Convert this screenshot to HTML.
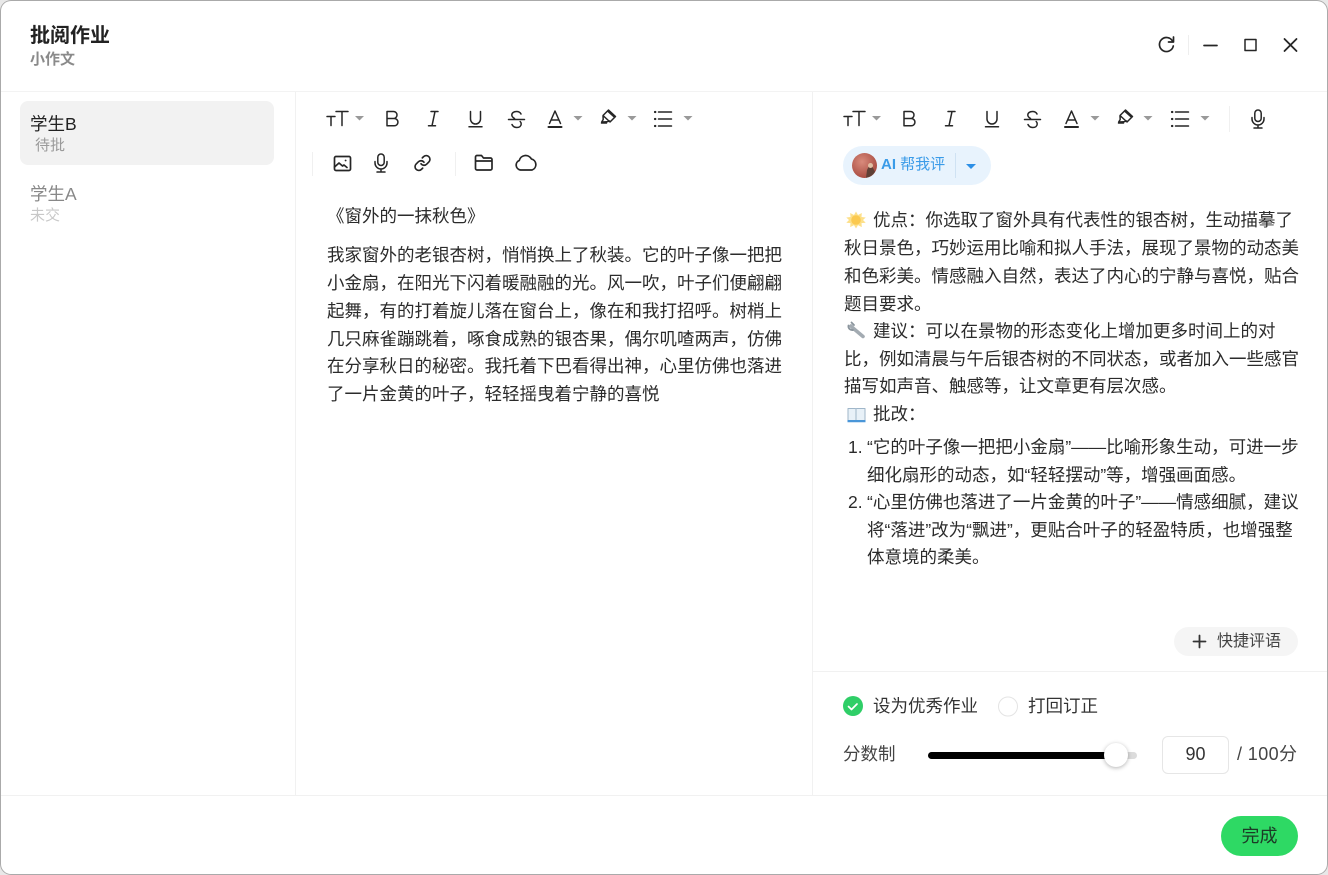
<!DOCTYPE html>
<html lang="zh"><head><meta charset="utf-8"><title>批阅作业</title>
<style>
html,body{margin:0;padding:0;width:1328px;height:875px;overflow:hidden;background:#e8e8e8}
#w{position:absolute;left:0;top:0;width:1328px;height:875px;background:#fff;border-radius:11px;overflow:hidden;box-shadow:inset 0 0 0 1px #aaa}
.t{position:absolute;white-space:nowrap;font-family:"Liberation Sans","Noto Sans CJK SC",sans-serif;color:#2b2b2b;font-size:17.5px;line-height:28px;font-weight:400}
.b{position:absolute}
svg{position:absolute;left:0;top:0}
</style></head><body>
<div id="w"></div>
<div class="b" style="left:295px;top:91px;width:1px;height:704px;background:#f1f1f1"></div>
<div class="b" style="left:812px;top:91px;width:1px;height:704px;background:#f1f1f1"></div>
<div class="b" style="left:1px;top:91px;width:1326px;height:1px;background:#f3f3f3"></div>
<div class="b" style="left:1px;top:795px;width:1326px;height:1px;background:#f1f1f1"></div>
<div class="b" style="left:813px;top:671px;width:514px;height:1px;background:#f1f1f1"></div>
<div class="b" style="left:20px;top:101px;width:254px;height:64px;background:#f2f2f2;border-radius:8px"></div>
<div class="b" style="left:1188px;top:35px;width:1px;height:20px;background:#eee"></div>
<div class="b" style="left:312px;top:152px;width:1px;height:24px;background:#f0f0f0"></div>
<div class="b" style="left:455px;top:152px;width:1px;height:24px;background:#f0f0f0"></div>
<div class="b" style="left:1229px;top:106px;width:1px;height:26px;background:#f0f0f0"></div>

<div class="t" style="left:30px;top:22px;font-size:20px;font-weight:700;color:#222">批阅作业</div>
<div class="t" style="left:30px;top:46px;font-size:15px;font-weight:700;color:#8a8a8a">小作文</div>
<div class="t" style="left:30px;top:110px;color:#222">学生B</div>
<div class="t" style="left:35px;top:132px;font-size:15px;color:#9a9a9a">待批</div>
<div class="t" style="left:30px;top:180px;color:#888">学生A</div>
<div class="t" style="left:30px;top:202px;font-size:15px;color:#c8c8c8">未交</div>

<div class="t" style="left:327px;top:202px">《窗外的一抹秋色》</div>
<div class="t" style="left:327px;top:241px">我家窗外的老银杏树，悄悄换上了秋装。它的叶子像一把把</div>
<div class="t" style="left:327px;top:269px">小金扇，在阳光下闪着暖融融的光。风一吹，叶子们便翩翩</div>
<div class="t" style="left:327px;top:297px">起舞，有的打着旋儿落在窗台上，像在和我打招呼。树梢上</div>
<div class="t" style="left:327px;top:325px">几只麻雀蹦跳着，啄食成熟的银杏果，偶尔叽喳两声，仿佛</div>
<div class="t" style="left:327px;top:352px">在分享秋日的秘密。我托着下巴看得出神，心里仿佛也落进</div>
<div class="t" style="left:327px;top:380px">了一片金黄的叶子，轻轻摇曳着宁静的喜悦</div>

<div class="b" style="left:843px;top:146px;width:148px;height:39px;border-radius:20px;background:#e8f3fd"></div>
<div class="b" style="left:955px;top:153px;width:1px;height:25px;background:#cfe2f3"></div>
<div class="t" style="left:881px;top:151px;font-size:15px;color:#3a9be8"><b style="font-weight:700">AI</b> 帮我评</div>

<div class="t" style="left:873px;top:206px">优点：你选取了窗外具有代表性的银杏树，生动描摹了</div>
<div class="t" style="left:844px;top:234px">秋日景色，巧妙运用比喻和拟人手法，展现了景物的动态美</div>
<div class="t" style="left:844px;top:262px">和色彩美。情感融入自然，表达了内心的宁静与喜悦，贴合</div>
<div class="t" style="left:844px;top:290px">题目要求。</div>
<div class="t" style="left:873px;top:317px">建议：可以在景物的形态变化上增加更多时间上的对</div>
<div class="t" style="left:844px;top:345px">比，例如清晨与午后银杏树的不同状态，或者加入一些感官</div>
<div class="t" style="left:844px;top:372px">描写如声音、触感等，让文章更有层次感。</div>
<div class="t" style="left:873px;top:400px">批改：</div>
<div class="t" style="left:848px;top:433px">1.</div>
<div class="t" style="left:867px;top:433px">“它的叶子像一把把小金扇”——比喻形象生动，可进一步</div>
<div class="t" style="left:867px;top:461px">细化扇形的动态，如“轻轻摆动”等，增强画面感。</div>
<div class="t" style="left:848px;top:488px">2.</div>
<div class="t" style="left:867px;top:488px">“心里仿佛也落进了一片金黄的叶子”——情感细腻，建议</div>
<div class="t" style="left:867px;top:516px">将“落进”改为“飘进”，更贴合叶子的轻盈特质，也增强整</div>
<div class="t" style="left:867px;top:543px">体意境的柔美。</div>

<div class="b" style="left:1174px;top:627px;width:124px;height:29px;border-radius:15px;background:#f5f5f5"></div>
<div class="t" style="left:1217px;top:627px;font-size:16px;line-height:29px;color:#444">快捷评语</div>
<div class="t" style="left:873px;top:692px;color:#333">设为优秀作业</div>
<div class="t" style="left:1028px;top:692px;color:#333">打回订正</div>
<div class="t" style="left:843px;top:740px;color:#444">分数制</div>
<div class="b" style="left:1162px;top:736px;width:65px;height:36px;border:1px solid #e6e6e6;border-radius:6px"></div>
<div class="t" style="left:1162px;top:740px;width:67px;text-align:center;font-size:18px;color:#333">90</div>
<div class="t" style="left:1237px;top:740px;font-size:18px;letter-spacing:.4px;color:#444">/ 100分</div>
<div class="b" style="left:928px;top:752px;width:209px;height:7px;border-radius:4px;background:#dcdcdc"></div>
<div class="b" style="left:928px;top:752px;width:188px;height:7px;border-radius:4px;background:#000"></div>
<div class="b" style="left:1104px;top:743px;width:24px;height:24px;border-radius:50%;background:#fff;box-shadow:0 1px 4px rgba(0,0,0,.3)"></div>
<div class="b" style="left:1221px;top:816px;width:77px;height:40px;border-radius:20px;background:#2ed964"></div>
<div class="t" style="left:1221px;top:822px;width:77px;text-align:center;font-size:18px;color:#1c3a26">完成</div>

<svg width="1328" height="875" viewBox="0 0 1328 875" fill="none" stroke="#262626" stroke-width="1.5" stroke-linecap="round" stroke-linejoin="round">
<defs>
<radialGradient id="av" cx="40%" cy="35%" r="70%"><stop offset="0" stop-color="#d98b7c"/><stop offset="1" stop-color="#a5483e"/></radialGradient>
<g id="tt"><path d="M0 5.500h8M4 5.500v9M9 .5h12M15 .5v14"/></g>
<g id="boldi"><path d="M-5.500-7h6.500a3.500 3.500 0 0 1 0 7h-6.500zM-5.500 0h7.300a3.600 3.600 0 0 1 0 7.300h-7.300z"/></g>
<g id="ital"><path d="M-2.500-7h7M-5 7.300h7M1.500-7l-3 14.300"/></g>
<g id="und"><path d="M-5-7.500v7.500a5 5 0 0 0 10 0v-7.500M-6.500 7.800h13"/></g>
<g id="str"><path d="M4.500-5.500c-1-2-3-2.500-4.500-2.500-2.800 0-4.700 1.500-4.700 3.500 0 1.500 1 2.500 2.700 3.500M-8 0h16M-4.500 5c1 2 3 3 4.700 3 2.800 0 4.500-1.500 4.500-3.500 0-1-.3-1.800-1-2.500"/></g>
<g id="acol"><path d="M-5.500 4.500L0-8l5.500 12.500M-3.800 1h7.600"/><path d="M-6.500 8h13" stroke-width="2"/></g>
<g id="hl"><path d="M0-6.500l7 6.500-5.500 5.500-7-6.500zM-5.500-.5l.2 3.500-1.500 2.500 5.300-.2 2.500-.8M-1-5.500l6.700 6" /><path d="M-7 6.500h5"/></g>
<g id="lst"><path d="M-3.500-7h13M-3.500 0h13M-3.500 7h13"/><path d="M-7-7h.3M-7 0h.3M-7 7h.3" stroke-width="2.200"/></g>
<g id="mic"><rect x="-3.200" y="-9" width="6.400" height="11.500" rx="3.200"/><path d="M-6-1.500v1.500a6 6 0 0 0 12 0v-1.500M0 6v3M-4 9h8"/></g>
<path id="car" d="M-4.500-2h9l-4.500 4.500z" fill="#999" stroke="none"/>
</defs>

<!-- window controls -->
<path d="M1172.500 41a7 7 0 1 0 .8 5" stroke-width="1.700"/><path d="M1173.500 37v5h-5" stroke-width="1.700"/>
<path d="M1204 45.500h13" stroke-width="1.700"/>
<rect x="1245" y="39.500" width="11" height="11" stroke-width="1.500"/>
<path d="M1284.500 39l12 12M1296.500 39l-12 12" stroke-width="1.800"/>

<!-- left toolbar -->
<use href="#tt" x="327" y="111"/><use href="#car" x="359.500" y="118"/>
<use href="#boldi" x="392.500" y="118.500"/><use href="#ital" x="433.500" y="118.500"/>
<use href="#und" x="475.500" y="119"/><use href="#str" x="516.500" y="119.500"/>
<use href="#acol" x="555" y="119"/><use href="#car" x="578" y="118"/>
<use href="#hl" x="608.500" y="116.500"/><use href="#car" x="632" y="118"/>
<use href="#lst" x="662" y="119"/><use href="#car" x="688" y="118"/>
<rect x="334.500" y="156.500" width="16" height="14" rx="1.500" stroke-width="1.700"/><path d="M334.500 167l4.500-4 3.500 3 1.500-1 3 2.500M345.500 160.500h.2" stroke-width="1.700"/>
<use href="#mic" x="381" y="163"/>
<g transform="translate(413.500,154) scale(.75)" stroke-width="2.200"><path d="M10 13a5 5 0 0 0 7.540.54l3-3a5 5 0 0 0-7.070-7.070l-1.720 1.710"/><path d="M14 11a5 5 0 0 0-7.540-.54l-3 3a5 5 0 0 0 7.070 7.070l1.710-1.710"/></g>
<path d="M475.500 168.500v-11.500a1.500 1.500 0 0 1 1.500-1.500h4.500l2 2.500h7a1.500 1.500 0 0 1 1.500 1.500v9a1.500 1.500 0 0 1-1.500 1.500h-13.500a1.500 1.500 0 0 1-1.500-1.500zM475.500 161h16.500" stroke-width="1.700"/>
<path d="M520.500 170a5 5 0 0 1-1.200-9.600 6.500 6.500 0 0 1 12-1.500 5.800 5.800 0 0 1 .8 11.100z" stroke-width="1.700"/>

<!-- right toolbar -->
<use href="#tt" x="844" y="111"/><use href="#car" x="876.500" y="118"/>
<use href="#boldi" x="909.500" y="118.500"/><use href="#ital" x="950.500" y="118.500"/>
<use href="#und" x="992" y="119"/><use href="#str" x="1032.500" y="119.500"/>
<use href="#acol" x="1071.500" y="119"/><use href="#car" x="1095" y="118"/>
<use href="#hl" x="1125.500" y="116.500"/><use href="#car" x="1148" y="118"/>
<use href="#lst" x="1179" y="119"/><use href="#car" x="1205" y="118"/>
<use href="#mic" x="1258" y="119"/>

<!-- avatar -->
<circle cx="864.500" cy="165.500" r="12.500" fill="url(#av)" stroke="none"/>
<path d="M866 177.700a12.500 12.500 0 0 0 9-6l-2.500-4.700-3.500-1-2 4z" fill="#5f4036" stroke="none"/>
<circle cx="870.500" cy="165.500" r="2.500" fill="#e0bfa3" stroke="none"/>
<path d="M966 164h10l-5 5z" fill="#2d8fe6" stroke="none"/>

<!-- emoji: sun -->
<g transform="translate(856,220)" stroke="none" fill="#fde08a"><path d="M0-8.500l2 3.500 3.800-2-.3 4 4.200.5-2.700 2.500 2.700 2.700-4.200.4.300 4-3.800-2-2 3.400-2-3.400-3.800 2 .3-4-4.200-.4 2.700-2.700-2.700-2.500 4.200-.5-.3-4 3.800 2z"/><circle r="4.800" fill="#fbc94f"/></g>
<!-- wrench -->
<path d="M851 326l2.500 2.500 9.500 8" stroke="#a3abb2" stroke-width="3.600"/>
<path d="M848.500 325.500c-.5 2.500 1.500 5 4.500 4.500M851.500 322.500l2.500 2.500" stroke="#8b959d" stroke-width="1.800"/>
<!-- book -->
<path d="M848 408.500h7.200c.5 0 .8.300.8.800v11.700h-8zM865 408.500h-8.200c-.5 0-.8.300-.8.800v11.700h9z" fill="#e8f1f8" stroke="#9fb6c9" stroke-width="1"/>
<path d="M847.500 420h18v2.200h-18z" fill="#4a96d8" stroke="none"/>

<!-- quick comment plus -->
<path d="M1199.500 635.500v12M1193.500 641.500h12" stroke="#333" stroke-width="1.800"/>
<!-- radios -->
<circle cx="853" cy="706" r="10" fill="#2fce67" stroke="none"/>
<path d="M848.500 706.500l3 3 5.500-5.500" stroke="#fff" stroke-width="1.700"/>
<circle cx="1008" cy="706.500" r="9.500" stroke="#e4e4e4" stroke-width="1"/>
</svg>
</body></html>
